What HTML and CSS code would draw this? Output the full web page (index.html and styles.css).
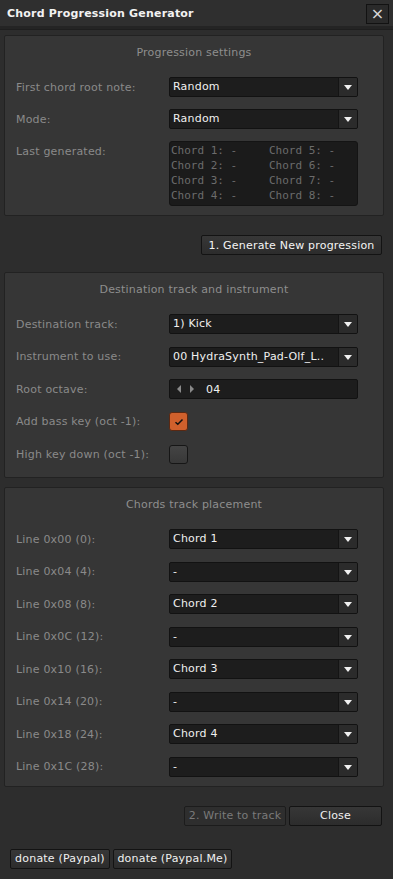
FILE: index.html
```html
<!DOCTYPE html>
<html>
<head>
<meta charset="utf-8">
<link rel="stylesheet" href="styles.css">
</head>
<body>
<div class="window">
  <div class="titlebar">
    <span class="title">Chord Progression Generator</span>
    <button class="close">×</button>
  </div>
  <div class="titlesep"></div>
  <div class="content">
    <section class="panel p1">
      <div class="panel-title">Progression settings</div>
      <div class="rows">
        <div class="row"><span class="label">First chord root note:</span><div class="popup"><span class="val">Random</span><span class="arrow"></span></div></div>
        <div class="row"><span class="label">Mode:</span><div class="popup"><span class="val">Random</span><span class="arrow"></span></div></div>
        <div class="row row-tall"><span class="label">Last generated:</span>
          <div class="lastgen">
            <div>Chord 1: -</div><div>Chord 5: -</div>
            <div>Chord 2: -</div><div>Chord 6: -</div>
            <div>Chord 3: -</div><div>Chord 7: -</div>
            <div>Chord 4: -</div><div>Chord 8: -</div>
          </div>
        </div>
      </div>
    </section>

    <div class="gen-row"><button class="btn gen">1. Generate New progression</button></div>

    <section class="panel p2">
      <div class="panel-title">Destination track and instrument</div>
      <div class="rows rows-loose">
        <div class="row"><span class="label">Destination track:</span><div class="popup"><span class="val">1) Kick</span><span class="arrow"></span></div></div>
        <div class="row"><span class="label">Instrument to use:</span><div class="popup"><span class="val">00 HydraSynth_Pad-Olf_L..</span><span class="arrow"></span></div></div>
        <div class="row"><span class="label">Root octave:</span>
          <div class="valuebox"><span class="tri tri-l"></span><span class="tri tri-r"></span><span class="num">04</span></div>
        </div>
        <div class="row"><span class="label">Add bass key (oct -1):</span>
          <div class="check checked"><svg width="10" height="8" viewBox="0 0 10 8"><path d="M1.5 4.2 L3.8 6.3 L8.5 1.5" fill="none" stroke="#111" stroke-width="1.5"/></svg></div>
        </div>
        <div class="row"><span class="label">High key down (oct -1):</span><div class="check"></div></div>
      </div>
    </section>

    <section class="panel p3">
      <div class="panel-title">Chords track placement</div>
      <div class="rows rows-loose">
        <div class="row"><span class="label">Line 0x00 (0):</span><div class="popup"><span class="val">Chord 1</span><span class="arrow"></span></div></div>
        <div class="row"><span class="label">Line 0x04 (4):</span><div class="popup"><span class="val">-</span><span class="arrow"></span></div></div>
        <div class="row"><span class="label">Line 0x08 (8):</span><div class="popup"><span class="val">Chord 2</span><span class="arrow"></span></div></div>
        <div class="row"><span class="label">Line 0x0C (12):</span><div class="popup"><span class="val">-</span><span class="arrow"></span></div></div>
        <div class="row"><span class="label">Line 0x10 (16):</span><div class="popup"><span class="val">Chord 3</span><span class="arrow"></span></div></div>
        <div class="row"><span class="label">Line 0x14 (20):</span><div class="popup"><span class="val">-</span><span class="arrow"></span></div></div>
        <div class="row"><span class="label">Line 0x18 (24):</span><div class="popup"><span class="val">Chord 4</span><span class="arrow"></span></div></div>
        <div class="row"><span class="label">Line 0x1C (28):</span><div class="popup"><span class="val">-</span><span class="arrow"></span></div></div>
      </div>
    </section>

    <div class="actions">
      <button class="btn write" disabled>2. Write to track</button>
      <button class="btn closebtn">Close</button>
    </div>
    <div class="donate">
      <button class="btn d1">donate (Paypal)</button>
      <button class="btn d2">donate (Paypal.Me)</button>
    </div>
  </div>
</div>
</body>
</html>
```

FILE: styles.css
```css
* { box-sizing: border-box; }
html, body { margin: 0; padding: 0; }
body {
  background: #2d2d2d;
  font-family: "DejaVu Sans", "Liberation Sans", sans-serif;
  font-size: 11px;
  letter-spacing: 0.2px;
  color: #e0e0e0;
  width: 393px;
  height: 879px;
  overflow: hidden;
}
.window { display: flex; flex-direction: column; }
.titlebar {
  height: 26px;
  display: flex;
  align-items: center;
  justify-content: space-between;
  padding: 0 4px 0 7px;
  background: #2f2f2f;
}
.title { font-weight: bold; font-size: 11px; color: #f2f2f2; padding-top: 1px; }
.close {
  width: 23px;
  height: 20px;
  margin-top: 2px;
  padding: 0;
  background: #2a2a2a;
  border: 1px solid #121212;
  color: #d8d8d8;
  font-family: "DejaVu Sans", sans-serif;
  font-size: 16px;
  line-height: 16px;
  letter-spacing: 0;
}
.titlesep {
  height: 4px;
  background: #242424;
  border-bottom: 1px solid #1e1e1e;
}
.content { display: flex; flex-direction: column; padding: 0 9px 0 4px; }
.panel {
  background: #363636;
  border: 1px solid #222;
  border-radius: 2px;
  padding: 7px 0 9px;
}
.p1 { margin-top: 5px; }
.p2 { margin-top: 17px; padding-bottom: 13px; }
.p3 { margin-top: 9px; padding-bottom: 9px; }
.panel-title {
  height: 20px;
  line-height: 20px;
  text-align: center;
  color: #8e8e8e;
}
.rows { display: flex; flex-direction: column; gap: 12px; margin-top: 14px; }
.rows-loose { gap: 12.5px; }
.row { display: flex; align-items: center; height: 20px; padding-left: 11px; }
.row-tall { height: 65px; align-items: flex-start; }
.row-tall .label { padding-top: 4px; }
.label { width: 153px; color: #8a8a8a; white-space: nowrap; }
.popup {
  width: 189px;
  height: 20px;
  display: flex;
  background: #1d1d1d;
  border: 1px solid #121212;
  border-radius: 2px;
  overflow: hidden;
}
.popup .val { flex: 1; padding-left: 3px; line-height: 18px; color: #f0f0f0; white-space: nowrap; }
.popup .arrow {
  width: 19px;
  background: #2b2b2b;
  border-left: 1px solid #141414;
  position: relative;
}
.popup .arrow::after {
  content: "";
  position: absolute;
  left: 5px;
  top: 7px;
  border-left: 4px solid transparent;
  border-right: 4px solid transparent;
  border-top: 5px solid #f0f0f0;
}
.lastgen {
  width: 189px;
  height: 65px;
  background: #1b1b1b;
  border: 1px solid #141414;
  border-radius: 3px;
  display: grid;
  grid-template-columns: 98px 1fr;
  grid-auto-rows: 15px;
  padding: 1px 0 0 1px;
  font-family: "DejaVu Sans Mono", monospace;
  font-size: 11px;
  letter-spacing: 0;
  line-height: 15px;
  color: #6c6c6c;
}
.valuebox {
  width: 189px;
  height: 20px;
  background: #1d1d1d;
  border: 1px solid #121212;
  border-radius: 2px;
  display: flex;
  align-items: center;
  padding-left: 7px;
}
.tri { width: 0; height: 0; border-top: 4px solid transparent; border-bottom: 4px solid transparent; }
.tri-l { border-right: 4px solid #8a8a8a; }
.tri-r { border-left: 4px solid #8a8a8a; margin-left: 9px; }
.num { margin-left: 12px; color: #f0f0f0; }
.check {
  width: 19px;
  height: 19px;
  border-radius: 3px;
  border: 1px solid #161616;
  background: linear-gradient(#444, #383838);
  display: flex;
  align-items: center;
  justify-content: center;
}
.check.checked {
  background: #d0602c;
  border-color: #5a2812;
}
.btn {
  font-family: "DejaVu Sans", "Liberation Sans", sans-serif;
  font-size: 11px;
  letter-spacing: 0.2px;
  height: 20px;
  padding: 0;
  color: #f0f0f0;
  background: linear-gradient(#373737, #2c2c2c);
  border: 1px solid #131313;
  border-radius: 2px;
}
.gen-row { display: flex; justify-content: flex-end; margin-top: 19px; padding-right: 2px; }
.gen { width: 181px; color: #f4f4f4; }
.actions { display: flex; justify-content: flex-end; gap: 3px; margin-top: 19px; padding-right: 2px; }
.write { width: 102px; color: #7a7a7a; background: #2e2e2e; border-color: #1c1c1c; }
.closebtn { width: 93px; }
.donate { display: flex; gap: 3px; margin-top: 23px; padding-left: 6px; }
.d1 { width: 100px; }
.d2 { width: 119px; }
```
